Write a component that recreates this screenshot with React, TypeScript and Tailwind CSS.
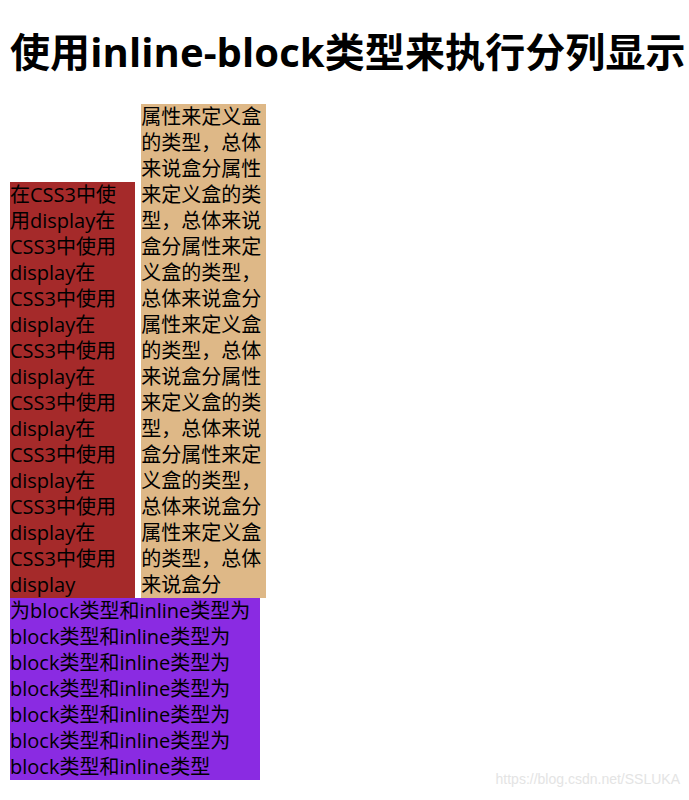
const redText = '在CSS3中使用display'.repeat(8)
const tanText = '属性来定义盒的类型，总体来说盒分'.repeat(7)
const blueText = '为block类型和inline类型'.repeat(7)

export default function App() {
  return (
    <div
      className="relative min-h-[800px] bg-white px-[10px] text-black"
      style={{ fontFamily: '"Open Sans", "Noto Sans CJK SC", sans-serif' }}
    >
      <h1 className="pt-[26px] pb-[26px] text-[40px] leading-[52px] font-bold tracking-[0.1px] whitespace-nowrap">
        使用inline-block类型来执行分列显示
      </h1>
      <div className="text-[20px] leading-[26px]">
        <div className="inline-block w-[125px] bg-[#a52a2a]">{redText}</div>{' '}
        <div className="ml-px inline-block w-[125px] bg-[#deb887]">{tanText}</div>
      </div>
      <div className="w-[250px] bg-[#8a2be2] text-[20px] leading-[26px]">{blueText}</div>
      <div
        className="absolute right-[9px] bottom-[10px] text-[14px] text-[#e4e4e4]"
        style={{ fontFamily: '"Liberation Sans", sans-serif' }}
      >
        https://blog.csdn.net/SSLUKA
      </div>
    </div>
  )
}
